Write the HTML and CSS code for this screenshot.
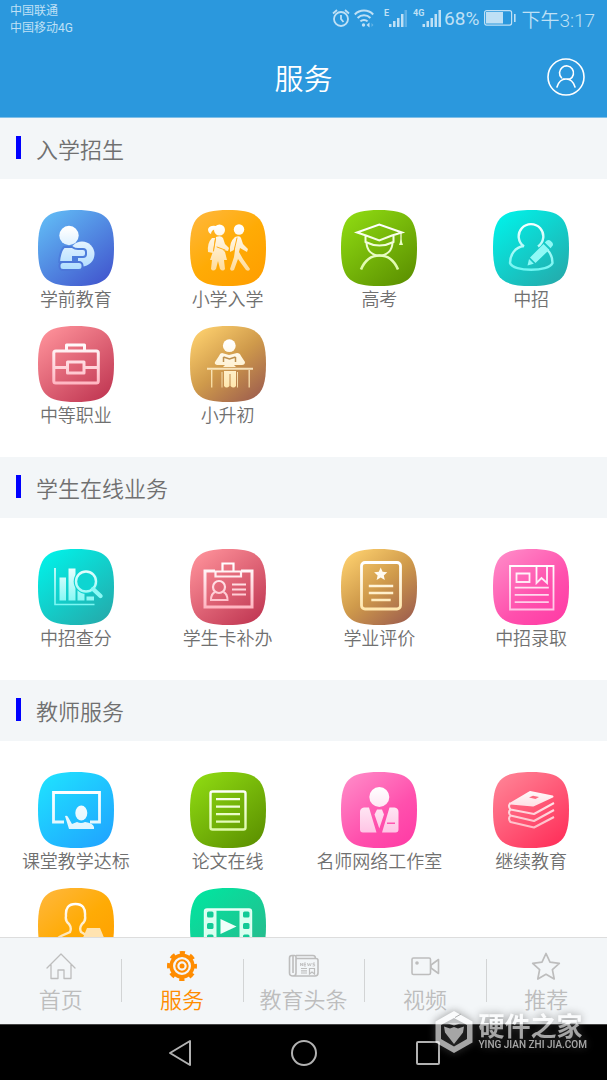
FILE: index.html
```html
<!DOCTYPE html>
<html lang="zh-CN">
<head>
    <meta charset="UTF-8">
    <meta name="viewport" content="width=device-width, initial-scale=1.0">
    <title>服务</title>
    <link rel="stylesheet" href="styles.css">
</head>
<body>

<!-- Shared tile shape and gradients -->
<svg class="defs" width="0" height="0" aria-hidden="true">
    <defs>
        <path id="tile" d="M38 0C68 0 76 8 76 38S68 76 38 76 0 68 0 38 8 0 38 0Z"/>
        <linearGradient id="blue" x1="0.1" y1="0" x2="0.9" y2="1"><stop offset="0" stop-color="#62bdf6"/><stop offset="1" stop-color="#4154cd"/></linearGradient>
        <linearGradient id="orange" x1="0.1" y1="0" x2="0.9" y2="1"><stop offset="0" stop-color="#ffb73b"/><stop offset="0.5" stop-color="#ffab05"/><stop offset="1" stop-color="#ff9e00"/></linearGradient>
        <linearGradient id="green" x1="0.1" y1="0" x2="0.9" y2="1"><stop offset="0" stop-color="#8fdb12"/><stop offset="1" stop-color="#5b8f00"/></linearGradient>
        <linearGradient id="teal" x1="0.1" y1="0" x2="0.9" y2="1"><stop offset="0" stop-color="#00f3ea"/><stop offset="1" stop-color="#25a9aa"/></linearGradient>
        <linearGradient id="red" x1="0.1" y1="0" x2="0.9" y2="1"><stop offset="0" stop-color="#ff939b"/><stop offset="1" stop-color="#bf3551"/></linearGradient>
        <linearGradient id="gold" x1="0.1" y1="0" x2="0.9" y2="1"><stop offset="0" stop-color="#ffd26f"/><stop offset="0.5" stop-color="#cf9a4b"/><stop offset="1" stop-color="#9c5c4e"/></linearGradient>
        <linearGradient id="pink" x1="0.1" y1="0" x2="0.9" y2="1"><stop offset="0" stop-color="#ff8bc8"/><stop offset="0.6" stop-color="#ff50ad"/><stop offset="1" stop-color="#ff3ba5"/></linearGradient>
        <linearGradient id="cyan" x1="0.1" y1="0" x2="0.9" y2="1"><stop offset="0" stop-color="#1fe2ff"/><stop offset="1" stop-color="#20a3ff"/></linearGradient>
        <linearGradient id="rose" x1="0.1" y1="0" x2="0.9" y2="1"><stop offset="0" stop-color="#ff8496"/><stop offset="1" stop-color="#ff2d58"/></linearGradient>
        <linearGradient id="mint" x1="0.1" y1="0" x2="0.9" y2="1"><stop offset="0" stop-color="#00e6a0"/><stop offset="1" stop-color="#2db58b"/></linearGradient>
        <linearGradient id="ink-blue" gradientUnits="userSpaceOnUse" x1="0" y1="18" x2="0" y2="60"><stop offset="0" stop-color="#fff"/><stop offset="1" stop-color="#aedcff"/></linearGradient>
        <linearGradient id="ink-cyan" gradientUnits="userSpaceOnUse" x1="0" y1="18" x2="0" y2="60"><stop offset="0" stop-color="#fff"/><stop offset="1" stop-color="#dcf5ff"/></linearGradient>
        <linearGradient id="ink-orange" gradientUnits="userSpaceOnUse" x1="0" y1="16" x2="0" y2="60"><stop offset="0" stop-color="#fff"/><stop offset="1" stop-color="#ffdc9b"/></linearGradient>
        <linearGradient id="ink-green" gradientUnits="userSpaceOnUse" x1="0" y1="16" x2="0" y2="60"><stop offset="0" stop-color="#fff"/><stop offset="1" stop-color="#dcfaa4"/></linearGradient>
        <linearGradient id="ink-teal" gradientUnits="userSpaceOnUse" x1="0" y1="16" x2="0" y2="60"><stop offset="0" stop-color="#f4ffff"/><stop offset="1" stop-color="#6ef6f2"/></linearGradient>
        <linearGradient id="ink-red" gradientUnits="userSpaceOnUse" x1="0" y1="16" x2="0" y2="60"><stop offset="0" stop-color="#fff"/><stop offset="1" stop-color="#ffb3bf"/></linearGradient>
        <linearGradient id="ink-gold" gradientUnits="userSpaceOnUse" x1="0" y1="16" x2="0" y2="60"><stop offset="0" stop-color="#fff"/><stop offset="1" stop-color="#ffe7ae"/></linearGradient>
        <linearGradient id="ink-pink" gradientUnits="userSpaceOnUse" x1="0" y1="16" x2="0" y2="60"><stop offset="0" stop-color="#fff"/><stop offset="1" stop-color="#ffc5e5"/></linearGradient>
    </defs>
</svg>

<div class="app">
    <header class="header">
        <div class="status-bar">
            <div class="carriers">
                <div>中国联通</div>
                <div>中国移动4G</div>
            </div>
            <div class="status-icons">
                <svg width="18" height="20" viewBox="0 0 18 20" fill="none" stroke="currentColor" stroke-width="1.800" aria-hidden="true">
                    <circle cx="9" cy="11" r="7"/>
                    <path d="M9 7v4l2.500 3M1 5.500l4-3.500M17 5.500l-4-3.500"/>
                </svg>
                <svg class="wifi" width="20" height="20" viewBox="0 0 20 20" fill="none" stroke="currentColor" stroke-width="2" aria-hidden="true">
                    <path d="M0.800 6.500c5-5.200 13.400-5.200 18.400 0M3.600 10c3.500-3.600 9.300-3.600 12.800 0M6.400 13.400c2-2 5.200-2 7.200 0"/>
                    <circle cx="9.500" cy="17" r="1.700" fill="currentColor" stroke="none"/>
                    <path d="M15.500 14.500v5L12.500 17z" fill="currentColor" stroke="none"/>
                    <path d="M17.500 15l2 2-2 2z" fill="currentColor" stroke="none" opacity="0.400"/>
                </svg>
                <svg class="signal" width="23" height="20" viewBox="0 0 23 20" fill="currentColor" aria-hidden="true">
                    <text class="signal-type" x="0" y="8">E</text>
                    <path d="M5 16h2.500v3H5zM9 13h2.500v6H9zM13 10h2.500v9H13zM17 6h2.500v13H17z"/>
                    <path d="M20.500 2H23v17h-2.500z" opacity="0.350"/>
                </svg>
                <svg class="signal second" width="28" height="20" viewBox="0 0 28 20" fill="currentColor" aria-hidden="true">
                    <text class="signal-type" x="0" y="8">4G</text>
                    <path d="M9.500 16H12v3H9.500zM13.500 13H16v6h-2.500zM17.500 10H20v9h-2.500zM21.500 6H24v13h-2.500zM25.500 2H28v17h-2.500z"/>
                </svg>
                <span class="battery-level">68%</span>
                <svg class="battery" width="32" height="16" viewBox="0 0 32 16" aria-hidden="true">
                    <rect x="0.600" y="0.600" width="27" height="14.500" rx="2" fill="none" stroke="currentColor" stroke-width="1.200"/>
                    <path d="M2 2h17v11.500H2zM30 4h1.600v8H30z" fill="currentColor"/>
                </svg>
                <span class="clock">下午3:17</span>
            </div>
        </div>
        <div class="title-bar">
            <h1>服务</h1>
            <button class="profile" type="button" aria-label="我的">
                <svg width="38" height="38" viewBox="0 0 38 38" fill="none" stroke="currentColor" stroke-width="1.600" stroke-linecap="round">
                    <circle cx="19" cy="19" r="18"/>
                    <path d="M14.500 19.800a7 7 0 1 1 8.500 1.200h-7M10 29c1.500-5 5-8 9-8s7.500 3 9 8"/>
                </svg>
            </button>
        </div>
    </header>

    <main class="content">
        <section>
            <h2 class="section-title">入学招生</h2>
            <div class="service-grid">
                <a class="service" href="#">
                    <svg class="service-icon" viewBox="0 0 76 76" aria-hidden="true">
                        <use href="#tile" fill="url(#blue)"/>
                        <g fill="url(#ink-blue)">
                            <circle cx="44" cy="44" r="12.500"/>
                            <path d="M26 37h8q3 2 6 2h5q3 0 3 3v2q0 3-3 3H35v5H21q1-11 5-15z" stroke="#4c7edc" stroke-width="2"/>
                            <path d="M36 48h4v4h-4z" fill="#4c7edc"/>
                            <rect x="21.500" y="52" width="23" height="8" rx="3.500" stroke="#4c76d9" stroke-width="2"/>
                            <circle cx="31" cy="25.500" r="9.700"/>
                        </g>
                    </svg>
                    <span>学前教育</span>
                </a>
                <a class="service" href="#">
                    <svg class="service-icon" viewBox="0 0 76 76" aria-hidden="true">
                        <use href="#tile" fill="url(#orange)"/>
                        <g fill="url(#ink-orange)" stroke-linejoin="round" stroke-linecap="round">
                            <circle cx="29.500" cy="20" r="5.500"/>
                            <path d="M26 16q-6-1-8 3 0 4 3 5 0-4 5-5z"/>
                            <path d="M26 27q5-2 7 1l2 6 4 4-1 3-5-1 2 2 2 8h-3l1 9q-2 3-5 0l-2-8-2 8q-3 3-5 0l1-9h-2q2-6 4-11z"/>
                            <path d="M22 28l3 0-2 15-5-1q-1-9 4-14z"/>
                            <circle cx="49" cy="19.500" r="5.200"/>
                            <path d="M45 27q5-2 6 1l2 6 5 5-1 3-7-4-1 4 4 7 7 10q-1 3-4 1l-8-11-4 11q-3 2-4-1l4-12 1-7z"/>
                            <path d="M45 27l2 1-3 12-4 2q-1-10 5-15z"/>
                            <path d="M25.500 29l-2 12M27 37l8 3M47 28l-3 13" fill="none" stroke="#ffad18"/>
                        </g>
                    </svg>
                    <span>小学入学</span>
                </a>
                <a class="service" href="#">
                    <svg class="service-icon" viewBox="0 0 76 76" aria-hidden="true">
                        <use href="#tile" fill="url(#green)"/>
                        <g fill="none" stroke="url(#ink-green)" stroke-width="2">
                            <path d="M16 22.500L38.300 14.500 61 22.500 51 25.500 38.300 30.500 25 25.500zM24.500 26v6q14 7 28 0v-6"/>
                            <path d="M25.500 32c0 9 6 13.500 13 13.500s13-4.500 13-13.500"/>
                            <path d="M20 59.500C24 50 30 45.500 38.500 45.500S53 50 57 59.500" stroke-width="2.600"/>
                            <path d="M60 23v9" stroke-width="1.200"/>
                            <path d="M60 29l2 6h-4z" fill="#eaffc6" stroke="none"/>
                        </g>
                    </svg>
                    <span>高考</span>
                </a>
                <a class="service" href="#">
                    <svg class="service-icon" viewBox="0 0 76 76" aria-hidden="true">
                        <use href="#tile" fill="url(#teal)"/>
                        <path d="M31 36.500a12.300 12.300 0 1 1 14 0M31 36c-9 1-14 9-14 17 3 9 39 9 42.500 0 0-6-2-10-5-13" fill="none" stroke="url(#ink-teal)" stroke-width="2.400"/>
                        <path d="M34.500 55.500l1.500-6.500 4.800 4.700zM37 47.500L50.500 34l5.800 5.700L42.500 53zM51.800 32.600l2-2q2-1.500 4 .5l1.500 1.500q1.500 2-.2 3.700l-1.500 2z" fill="#8ff9f6"/>
                    </svg>
                    <span>中招</span>
                </a>
                <a class="service" href="#">
                    <svg class="service-icon" viewBox="0 0 76 76" aria-hidden="true">
                        <use href="#tile" fill="url(#red)"/>
                        <g fill="none" stroke="url(#ink-red)" stroke-width="3" stroke-linejoin="round">
                            <rect x="15.800" y="25" width="44.500" height="32" rx="2"/>
                            <path d="M28.500 25v-6h18v6M16 41.500h13.500M46 41.500h14"/>
                            <rect x="29.500" y="36" width="16.500" height="11"/>
                        </g>
                    </svg>
                    <span>中等职业</span>
                </a>
                <a class="service" href="#">
                    <svg class="service-icon" viewBox="0 0 76 76" aria-hidden="true">
                        <use href="#tile" fill="url(#gold)"/>
                        <g fill="url(#ink-gold)">
                            <circle cx="39.300" cy="19.700" r="6.400"/>
                            <path d="M32 27l7 2 8-2q3 0 4 3l4 6q0 3-3 3l-8 0 2 2H33l2-2-8 0q-3-1-2-3l4-6q1-3 3-3z"/>
                            <path d="M33.500 31l6 2 6-2M33.500 31v5M45.500 31v5" fill="none" stroke="#bd8f4c" stroke-width="1.500"/>
                            <path d="M17 41.800h46v2H17zM21 44h1.400v17.500H21zM58.500 44h1.400v17.500h-1.400zM31.500 46h1v15.500h-1zM47 46h1v15.500h-1z" opacity="0.850"/>
                            <path d="M34 45h12v15q-2.500 3-5.500 0V48h-1v12q-3 3-5.500 0z"/>
                        </g>
                    </svg>
                    <span>小升初</span>
                </a>
            </div>
        </section>

        <section>
            <h2 class="section-title">学生在线业务</h2>
            <div class="service-grid">
                <a class="service" href="#">
                    <svg class="service-icon" viewBox="0 0 76 76" aria-hidden="true">
                        <use href="#tile" fill="url(#teal)"/>
                        <path d="M17 19v36.500h39.500" fill="none" stroke="url(#ink-teal)" stroke-width="1.600"/>
                        <path d="M21.500 28.500h6.500v23h-6.500zM30.500 19.500H37.500v32h-7zM39.500 40h7v11.500h-7zM48.500 47.500h7.500v4h-7.500z" fill="url(#ink-teal)"/>
                        <circle cx="48" cy="32.500" r="12.300" fill="#0ed5d1"/>
                        <circle cx="48" cy="32.500" r="10" fill="none" stroke="url(#ink-teal)" stroke-width="2.400"/>
                        <path d="M55 40l7.500 7" stroke="#8cf9f5" stroke-width="4.400" stroke-linecap="round"/>
                    </svg>
                    <span>中招查分</span>
                </a>
                <a class="service" href="#">
                    <svg class="service-icon" viewBox="0 0 76 76" aria-hidden="true">
                        <use href="#tile" fill="url(#red)"/>
                        <g fill="none" stroke="url(#ink-red)" stroke-width="2.200">
                            <path d="M25 22H15v36h47V22H51" stroke-width="3"/>
                            <path d="M32.500 22v-7.500h11V22M25.500 22.500h25.500v5H25.500z"/>
                            <circle cx="29" cy="38" r="6"/>
                            <path d="M25 43q-4 2-4 8h16.500q0-6-4-8M42 35.500h14M42 40.500h14M42 45.500h14" stroke-width="2"/>
                        </g>
                    </svg>
                    <span>学生卡补办</span>
                </a>
                <a class="service" href="#">
                    <svg class="service-icon" viewBox="0 0 76 76" aria-hidden="true">
                        <use href="#tile" fill="url(#gold)"/>
                        <g fill="none" stroke="url(#ink-gold)" stroke-width="2.800" stroke-linecap="round">
                            <rect x="20.500" y="13.500" width="39" height="46.500" rx="3.500"/>
                            <path d="M29 36.900h22v.2H29zM29 43.900h22v.2H29zM31.500 50.900h17v.2h-17z" stroke-width="2.400"/>
                            <path d="M39.700 18.500l1.900 4.300 4.700.5-3.500 3.100 1 4.600-4.100-2.400-4.100 2.400 1-4.600-3.500-3.100 4.700-.5z" fill="#fffaf0" stroke="none"/>
                        </g>
                    </svg>
                    <span>学业评价</span>
                </a>
                <a class="service" href="#">
                    <svg class="service-icon" viewBox="0 0 76 76" aria-hidden="true">
                        <use href="#tile" fill="url(#pink)"/>
                        <g fill="none" stroke="url(#ink-pink)" stroke-width="1.800">
                            <path d="M17 17h43.500v43.500H17zM23.500 24.500h13v8.500h-13zM43.500 17v17l5-5 5.500 5V17"/>
                            <path d="M22.500 38.500h32.500v.1H22.500zM22.500 45.800h32.500v.1H22.500zM22.500 53h32.500v.1H22.500z" stroke-width="1.600"/>
                        </g>
                    </svg>
                    <span>中招录取</span>
                </a>
            </div>
        </section>

        <section>
            <h2 class="section-title">教师服务</h2>
            <div class="service-grid">
                <a class="service" href="#">
                    <svg class="service-icon" viewBox="0 0 76 76" aria-hidden="true">
                        <use href="#tile" fill="url(#cyan)"/>
                        <path d="M26 50H15.500V20.500h46V50H52" fill="none" stroke="url(#ink-cyan)" stroke-width="2.800"/>
                        <g fill="url(#ink-cyan)">
                            <ellipse cx="43.300" cy="41" rx="6" ry="7.500"/>
                            <path d="M27 44q2-1 3 1l4 7 5-2q4 2 8 0 8 1 9 5v2H31z"/>
                        </g>
                    </svg>
                    <span>课堂教学达标</span>
                </a>
                <a class="service" href="#">
                    <svg class="service-icon" viewBox="0 0 76 76" aria-hidden="true">
                        <use href="#tile" fill="url(#green)"/>
                        <g fill="none" stroke="url(#ink-green)" stroke-width="2.400">
                            <rect x="20.500" y="19.500" width="35" height="38" rx="2"/>
                            <path d="M27 27h22v.2H27zM27 34.500h22v.2H27zM27 42h22v.2H27zM27 49.500h22v.2H27z" stroke-width="2"/>
                        </g>
                    </svg>
                    <span>论文在线</span>
                </a>
                <a class="service" href="#">
                    <svg class="service-icon" viewBox="0 0 76 76" aria-hidden="true">
                        <use href="#tile" fill="url(#pink)"/>
                        <g fill="url(#ink-pink)">
                            <circle cx="38.300" cy="25" r="10"/>
                            <path d="M28 35.500l7.500 25H22q-3 0-3-3V40q0-4 4-4.500zM48.500 35.500l-7.500 25h13.500q3 0 3-3V40q0-4-4-4.500zM36 37.500h5l2 5-4.700 14-4.800-14z"/>
                            <path d="M46 50.500h8v1.500h-8z" fill="#ff56b0"/>
                        </g>
                    </svg>
                    <span>名师网络工作室</span>
                </a>
                <a class="service" href="#">
                    <svg class="service-icon" viewBox="0 0 76 76" aria-hidden="true">
                        <use href="#tile" fill="url(#rose)"/>
                        <g fill="none" stroke="url(#ink-red)" stroke-width="2" stroke-linejoin="round">
                            <path d="M59.500 24.500L40 33.500 17.500 31.500 37 20z" fill="url(#ink-red)"/>
                            <path d="M17.500 31q-3 3 0 6.500L41 42l20-11M17.500 37.500q-3 3 0 6L41 49l20-11M17.500 43.500q-3 3 0 6.500L41 55.500l20-10.500"/>
                            <path d="M36 25.500l4-1.800 6 1.200-3.500 2z" fill="#ff6b82" stroke="none"/>
                        </g>
                    </svg>
                    <span>继续教育</span>
                </a>
                <a class="service" href="#">
                    <svg class="service-icon" viewBox="0 0 76 76" aria-hidden="true">
                        <use href="#tile" fill="url(#orange)"/>
                        <path d="M18 58q0-8 5-10l9-4q2-4-1-8-4-3-3-8-1-12 9.500-12T47 28q1 5-3 8-3 4-1 8l5 3" fill="none" stroke="url(#ink-orange)" stroke-width="2.400"/>
                        <path d="M49 40h13l5 12-5 12H49l-5-12z" fill="#ffe3b0"/>
                    </svg>
                </a>
                <a class="service" href="#">
                    <svg class="service-icon" viewBox="0 0 76 76" aria-hidden="true">
                        <use href="#tile" fill="url(#mint)"/>
                        <rect x="15" y="21.500" width="46" height="36" rx="2" fill="none" stroke="#eafff7" stroke-width="2.400"/>
                        <path d="M14.500 22h12v35h-12zM49.500 22h12v35h-12z" fill="#d9fff0"/>
                        <path d="M30.500 31l16 7.500-16 7.500z" fill="#f1fffa"/>
                        <g fill="#12ca96">
                            <rect x="17" y="23.500" width="6.500" height="6" rx="1.500"/>
                            <rect x="17" y="35" width="6.500" height="6" rx="1.500"/>
                            <rect x="17" y="46.500" width="6.500" height="6" rx="1.500"/>
                            <rect x="53" y="23.500" width="6.500" height="6" rx="1.500"/>
                            <rect x="53" y="35" width="6.500" height="6" rx="1.500"/>
                            <rect x="53" y="46.500" width="6.500" height="6" rx="1.500"/>
                        </g>
                    </svg>
                </a>
            </div>
        </section>
    </main>

    <nav class="tab-bar">
        <a class="tab" href="#">
            <svg width="32" height="32" viewBox="0 0 32 32" fill="none" stroke="currentColor" stroke-width="1.300" stroke-linejoin="round" stroke-linecap="round" aria-hidden="true">
                <path d="M2 18L16 4l14 14M6 15v13.500h7V20h6v8.500h7V15"/>
            </svg>
            <span>首页</span>
        </a>
        <a class="tab active" href="#">
            <svg width="32" height="32" viewBox="0 0 32 32" fill="none" stroke="currentColor" aria-hidden="true">
                <circle cx="16" cy="16" r="13.300" stroke-width="3.400" stroke-dasharray="5.200 5.245" stroke-dashoffset="2.600"/>
                <circle cx="16" cy="16" r="10.800" stroke-width="3.600"/>
                <circle cx="16" cy="16" r="5.700" stroke-width="2"/>
                <circle cx="16" cy="16" r="2.500" fill="currentColor" stroke="none"/>
            </svg>
            <span>服务</span>
        </a>
        <a class="tab" href="#">
            <svg width="32" height="32" viewBox="0 0 32 32" fill="none" stroke="currentColor" stroke-width="1.600" aria-hidden="true">
                <path d="M8 23V7q0-1.500-1.500-1.500H4Q1.500 5.500 1.500 8v15q0 3 3.500 3H27q3 0 3-3V10.500q0-2-2-2H8M5 6v17M8 23q0 3-3 3M8 5.500h17q2.500 0 2.500 3"/>
                <path d="M13 18.500h6M13 20.800h6M13 23h6M21.500 24v-5.500h5V24l-2.500-2z" stroke-width="1.200"/>
                <path d="M12.500 16v-3l2 3v-3M18 13h-2v3h2M16 14.500h2M19.300 13l1 3 1-2.500 1 2.500 1-3M27 13h-2v1.500h1.600V16h-2" stroke-width="0.800"/>
            </svg>
            <span>教育头条</span>
        </a>
        <a class="tab" href="#">
            <svg width="32" height="32" viewBox="0 0 32 32" fill="none" stroke="currentColor" stroke-width="1.600" stroke-linejoin="round" aria-hidden="true">
                <rect x="3" y="8" width="18.500" height="16.500" rx="1.500"/>
                <path d="M22 15l7.500-5.500v14L22 18z"/>
                <circle cx="8" cy="13" r="1.800" fill="currentColor" stroke="none"/>
            </svg>
            <span>视频</span>
        </a>
        <a class="tab" href="#">
            <svg width="32" height="32" viewBox="0 0 32 32" fill="none" stroke="currentColor" stroke-width="1.700" stroke-linejoin="round" aria-hidden="true">
                <path d="M16 3.500l4 8.700 9.300 1.100-6.900 6.400L24.200 29 16 24.300 7.800 29l1.800-9.300-6.900-6.400 9.300-1.100z"/>
            </svg>
            <span>推荐</span>
        </a>
    </nav>

    <div class="system-nav">
        <button type="button" aria-label="返回">
            <svg width="28" height="28" viewBox="0 0 28 28" fill="none" stroke="currentColor" stroke-width="2" stroke-linejoin="round"><path d="M24 2v24L4 14z"/></svg>
        </button>
        <button type="button" aria-label="主屏幕">
            <svg width="28" height="28" viewBox="0 0 28 28" fill="none" stroke="currentColor" stroke-width="2"><circle cx="14" cy="14" r="12"/></svg>
        </button>
        <button type="button" aria-label="最近任务">
            <svg width="28" height="28" viewBox="0 0 28 28" fill="none" stroke="currentColor" stroke-width="2"><rect x="3" y="3" width="22" height="22" rx="1"/></svg>
        </button>
    </div>

    <div class="watermark">
        <svg width="38" height="44" viewBox="0 0 38 44" aria-hidden="true">
            <path fill="currentColor" fill-rule="evenodd" d="M19 1l18.500 10.500v21L19 43 .5 32.500v-21zM19 8L6 15v14l13 7.500L32 29V15z"/>
            <path fill="currentColor" d="M9 16.500l6 2 4-1.500 4 1.500 6-2-1 6-9 11.500-9-11.500zM13 13.500h12l-6 2z"/>
            <path stroke="#888" d="M20 7.500l6-3.500"/>
        </svg>
        <div>
            <div class="watermark-name">硬件之家</div>
            <div class="watermark-url">YING JIAN ZHI JIA.COM</div>
        </div>
    </div>
</div>

</body>
</html>
```
FILE: styles.css
```css
* {
    box-sizing: border-box;
}
body {
    margin: 0;
    font-family: Roboto, "Noto Sans CJK SC", sans-serif;
    font-weight: 350;
    color: #707070;
    background-color: #fff;
}
a {
    color: inherit;
    text-decoration: none;
}
button {
    padding: 0;
    border: none;
    background: none;
    color: inherit;
    cursor: pointer;
}
svg {
    display: block;
}
.defs {
    position: absolute;
}
.app {
    position: relative;
    display: flex;
    flex-direction: column;
    height: 100vh;
}

/* Header */
.header {
    flex: none;
    color: #fff;
    background-color: #2b98dd;
    border-bottom: 1px solid #7fbfe8;
}
.status-bar {
    display: flex;
    justify-content: space-between;
    padding: 3px 12px 0 10px;
    height: 38px;
    color: #bfe0f5;
}
.carriers {
    font-size: 12px;
    line-height: 17px;
    font-weight: 400;
}
.status-icons {
    display: flex;
    align-items: center;
    height: 30px;
    font-size: 19px;
    font-weight: 400;
}
.wifi {
    margin-left: 4px;
}
.signal {
    margin-left: 10px;
}
.signal.second {
    margin-left: 6px;
}
.signal-type {
    font-size: 9px;
    font-weight: 700;
}
.battery-level {
    margin-left: 3px;
}
.battery {
    margin: 0 5px;
}
.clock {
    font-weight: 350;
}
.title-bar {
    display: grid;
    grid-template-columns: 1fr auto 1fr;
    align-items: center;
    height: 79px;
    padding: 0 22px 2px;
}
.title-bar h1 {
    grid-column: 2;
    margin: 0;
    font-size: 29px;
    font-weight: 350;
}
.profile {
    justify-self: end;
}

/* Services */
.content {
    flex: 1;
    min-height: 0;
    overflow: hidden;
}
.section-title {
    display: flex;
    align-items: center;
    gap: 15px;
    height: 61px;
    margin: 0;
    padding: 0 16px 2px;
    font-size: 22px;
    font-weight: 350;
    background-color: #f3f6f8;
}
.section-title::before {
    content: "";
    width: 5px;
    height: 23px;
    background-color: #00f;
}
.service-grid {
    display: grid;
    grid-template-columns: repeat(4, 1fr);
    padding: 31px 0 15px;
}
.service {
    display: flex;
    flex-direction: column;
    align-items: center;
    height: 116px;
    font-size: 18px;
    line-height: 27px;
    white-space: nowrap;
}
.service-icon {
    width: 76px;
    height: 76px;
}

/* Bottom tabs */
.tab-bar {
    flex: none;
    display: flex;
    height: 87px;
    padding-top: 12px;
    background-color: #f3f6f8;
    border-top: 1px solid #ddd;
}
.tab {
    flex: 1;
    position: relative;
    display: flex;
    flex-direction: column;
    align-items: center;
    gap: 3px;
    font-size: 22px;
    line-height: 32px;
    color: #bdbdbd;
}
.tab.active {
    color: #ff8c00;
}
.tab + .tab::before {
    content: "";
    position: absolute;
    left: 0;
    top: 9px;
    width: 1px;
    height: 43px;
    background-color: #d2d4d5;
}

/* Phone buttons */
.system-nav {
    flex: none;
    display: flex;
    justify-content: center;
    align-items: center;
    gap: 96px;
    height: 56px;
    color: #b2b2b2;
    background-color: #000;
    border-top: 1px solid #444;
}

.watermark {
    position: absolute;
    right: 20px;
    bottom: 26px;
    display: flex;
    align-items: center;
    gap: 5px;
    color: #fff;
    opacity: 0.65;
    filter: drop-shadow(0 0 4px #555);
    pointer-events: none;
}
.watermark-name {
    font-family: "Noto Sans CJK SC", sans-serif;
    font-size: 26px;
    line-height: 26px;
    font-weight: 700;
}
.watermark-url {
    font-family: Roboto, sans-serif;
    font-size: 10px;
    line-height: 14px;
    font-weight: 500;
}
```
